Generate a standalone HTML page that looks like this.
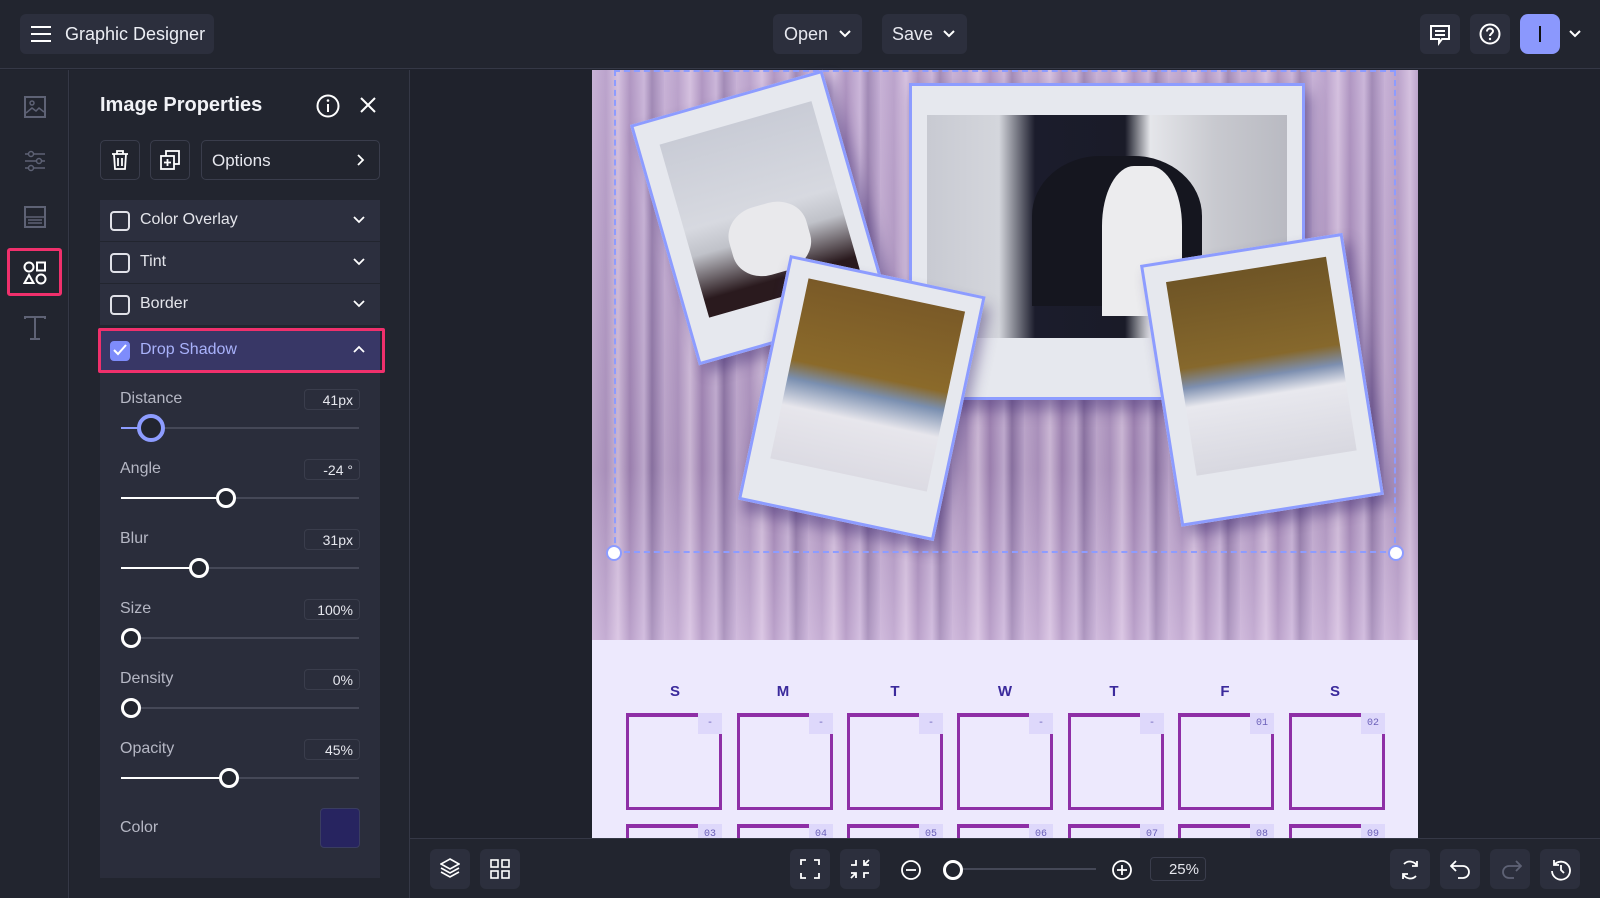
<!DOCTYPE html>
<html><head><meta charset="utf-8"><style>
*{box-sizing:border-box;margin:0;padding:0}
html,body{width:1600px;height:898px;overflow:hidden}
body{background:#1f222c;font-family:"Liberation Sans",sans-serif;color:#e6e7ee;position:relative}
.abs{position:absolute}
.btn{position:absolute;background:#2c2f3d;border-radius:6px}
.row{position:absolute;left:100px;width:280px;height:41px;background:#2c2f3e;font-size:16px;color:#e3e4ea}
.cb{position:absolute;left:10px;top:11px;width:20px;height:20px;border:2px solid #e0e1e8;border-radius:4px}
.row span{position:absolute;left:40px;top:11px}
.chev{position:absolute;right:14px;top:13px;width:14px;height:14px}
.lbl{position:absolute;left:120px;font-size:16px;color:#b5b7c4}
.val{position:absolute;left:304px;width:56px;height:21px;border:1px solid #3a3d4c;border-radius:4px;font-size:14px;text-align:right;padding:2px 6px 0 0;color:#e6e7ee}
.track{position:absolute;left:121px;width:238px;height:2px;background:#454857}
.fill{position:absolute;left:0;top:0;height:2px;background:#fff}
.th{position:absolute;width:20px;height:20px;border:3px solid #fff;border-radius:50%;background:#22252f;top:-9px}
.tb{position:absolute;width:40px;height:40px;background:#2c2f3d;border-radius:6px}
.cell{position:absolute;width:96px;height:97px;border:3px solid #8e2fa6;border-top-width:4px}
.tag{position:absolute;right:-3px;top:-4px;width:24px;height:21px;background:#ded8fb;font-size:10px;color:#6a5fb8;text-align:center;line-height:21px;font-family:"Liberation Mono",monospace}
.day{position:absolute;top:43px;font-size:15px;font-weight:bold;color:#3b2a9c;width:40px;text-align:center}
.pol{position:absolute;background:#e6e8ee;border:3px solid #8d9cff;box-shadow:6px 10px 14px rgba(60,40,110,.45)}
.pol div{position:absolute}
</style></head><body>
<!-- top bar -->
<div class="abs" style="left:0;top:0;width:1600px;height:69px;background:#22252f;border-bottom:1px solid #353846"></div>
<div class="btn" style="left:20px;top:14px;width:194px;height:40px"></div>
<svg class="abs" style="left:31px;top:25px" width="20" height="18"><path d="M0 2H20M0 9H20M0 16H20" stroke="#fff" stroke-width="2"/></svg>
<div class="abs" style="left:65px;top:24px;font-size:18px;color:#eceef4">Graphic Designer</div>
<div class="btn" style="left:773px;top:14px;width:89px;height:40px"></div>
<div class="abs" style="left:784px;top:24px;font-size:18px">Open</div>
<svg class="abs" style="left:839px;top:30px" width="12" height="8"><path d="M1 1L6 6L11 1" stroke="#fff" stroke-width="2" fill="none"/></svg>
<div class="btn" style="left:882px;top:14px;width:85px;height:40px"></div>
<div class="abs" style="left:892px;top:24px;font-size:18px">Save</div>
<svg class="abs" style="left:943px;top:30px" width="12" height="8"><path d="M1 1L6 6L11 1" stroke="#fff" stroke-width="2" fill="none"/></svg>
<div class="btn" style="left:1420px;top:14px;width:40px;height:40px"></div>
<svg class="abs" style="left:1429px;top:24px" width="22" height="22"><path d="M2 2H20V15H13L10 19L10 15H2Z" stroke="#fff" stroke-width="2" fill="none"/><path d="M6 7H16M6 11H16" stroke="#fff" stroke-width="2"/></svg>
<div class="btn" style="left:1470px;top:14px;width:40px;height:40px"></div>
<svg class="abs" style="left:1479px;top:23px" width="22" height="22"><circle cx="11" cy="11" r="9.5" stroke="#fff" stroke-width="2" fill="none"/><path d="M8 8.5C8 6.5 9.5 5.5 11 5.5S14 6.5 14 8.3C14 10.3 11 10.5 11 13" stroke="#fff" stroke-width="2" fill="none"/><circle cx="11" cy="16" r="1.2" fill="#fff"/></svg>
<div class="abs" style="left:1520px;top:14px;width:40px;height:40px;background:#8b98fd;border-radius:8px"></div>
<div class="abs" style="left:1539px;top:26px;width:2px;height:16px;background:#111"></div>
<svg class="abs" style="left:1569px;top:30px" width="12" height="8"><path d="M1 1L6 6L11 1" stroke="#fff" stroke-width="2" fill="none"/></svg>
<!-- rail -->
<div class="abs" style="left:0;top:70px;width:69px;height:828px;background:#22252f;border-right:1px solid #353846"></div>
<svg class="abs" style="left:24px;top:96px" width="22" height="22"><rect x="1" y="1" width="20" height="20" stroke="#5e6275" stroke-width="2" fill="none"/><circle cx="8" cy="7" r="2" stroke="#5e6275" stroke-width="1.5" fill="none"/><path d="M2 17L8 12L12 15L15 12L20 16" stroke="#5e6275" stroke-width="1.5" fill="none"/></svg>
<svg class="abs" style="left:24px;top:150px" width="22" height="22"><path d="M1 4H21M1 11H21M1 18H21" stroke="#5e6275" stroke-width="1.5"/><circle cx="7" cy="4" r="2.5" fill="#22252f" stroke="#5e6275" stroke-width="1.5"/><circle cx="15" cy="11" r="2.5" fill="#22252f" stroke="#5e6275" stroke-width="1.5"/><circle cx="7" cy="18" r="2.5" fill="#22252f" stroke="#5e6275" stroke-width="1.5"/></svg>
<svg class="abs" style="left:24px;top:206px" width="22" height="22"><rect x="1" y="1" width="20" height="20" stroke="#5e6275" stroke-width="2" fill="none"/><path d="M1 11H21M4 14H18M4 17H18" stroke="#5e6275" stroke-width="1.5"/></svg>
<div class="abs" style="left:7px;top:248px;width:55px;height:48px;border:3px solid #f0306c;border-radius:3px"></div>
<svg class="abs" style="left:23px;top:261px" width="24" height="24"><circle cx="6" cy="6" r="4.5" stroke="#fff" stroke-width="2" fill="none"/><rect x="14" y="1.5" width="8" height="8" stroke="#fff" stroke-width="2" fill="none"/><path d="M6 14L10.5 22H1.5Z" stroke="#fff" stroke-width="2" fill="none"/><circle cx="18" cy="18" r="4.5" stroke="#fff" stroke-width="2" fill="none"/></svg>
<svg class="abs" style="left:24px;top:316px" width="22" height="24"><path d="M1 3V1H21V3M11 1V23M6 23H16" stroke="#5e6275" stroke-width="2" fill="none"/></svg>
<!-- panel -->
<div class="abs" style="left:70px;top:70px;width:340px;height:828px;background:#22252f;border-right:1px solid #353846"></div>
<div class="abs" style="left:100px;top:94px;font-size:20px;font-weight:bold;color:#f1f2f6">Image Properties</div>
<svg class="abs" style="left:316px;top:94px" width="24" height="24"><circle cx="12" cy="12" r="10.5" stroke="#fff" stroke-width="2" fill="none"/><path d="M12 10V18" stroke="#fff" stroke-width="2"/><circle cx="12" cy="6.5" r="1.3" fill="#fff"/></svg>
<svg class="abs" style="left:360px;top:97px" width="16" height="16"><path d="M1 1L15 15M15 1L1 15" stroke="#fff" stroke-width="2"/></svg>
<div class="abs" style="left:100px;top:140px;width:40px;height:40px;border:1px solid #3a3d4c;border-radius:5px"></div>
<svg class="abs" style="left:111px;top:150px" width="18" height="20"><path d="M1 4H17M6 4V1H12V4M3 4L4 19H14L15 4M7 8V16M11 8V16" stroke="#fff" stroke-width="1.8" fill="none"/></svg>
<div class="abs" style="left:150px;top:140px;width:40px;height:40px;border:1px solid #3a3d4c;border-radius:5px"></div>
<svg class="abs" style="left:160px;top:150px" width="20" height="20"><rect x="6" y="1" width="13" height="13" stroke="#fff" stroke-width="1.8" fill="none"/><rect x="1" y="6" width="13" height="13" stroke="#fff" stroke-width="1.8" fill="#22252f"/><path d="M7.5 9V16M4 12.5H11" stroke="#fff" stroke-width="1.8"/></svg>
<div class="abs" style="left:201px;top:140px;width:179px;height:40px;border:1px solid #3a3d4c;border-radius:5px"></div>
<div class="abs" style="left:212px;top:151px;font-size:17px">Options</div>
<svg class="abs" style="left:357px;top:154px" width="8" height="12"><path d="M1 1L6 6L1 11" stroke="#fff" stroke-width="1.8" fill="none"/></svg>

<div class="row" style="top:200px"><div class="cb"></div><span>Color Overlay</span><svg class="chev" viewBox="0 0 14 14"><path d="M2 4L7 9L12 4" stroke="#fff" stroke-width="1.8" fill="none"/></svg></div>
<div class="row" style="top:242px"><div class="cb"></div><span>Tint</span><svg class="chev" viewBox="0 0 14 14"><path d="M2 4L7 9L12 4" stroke="#fff" stroke-width="1.8" fill="none"/></svg></div>
<div class="row" style="top:284px"><div class="cb"></div><span>Border</span><svg class="chev" viewBox="0 0 14 14"><path d="M2 4L7 9L12 4" stroke="#fff" stroke-width="1.8" fill="none"/></svg></div>
<div class="row" style="top:330px;background:#383766;color:#a9b2fb"><div class="cb" style="background:#7e8cfb;border-color:#7e8cfb"></div><svg class="abs" style="left:13px;top:14px" width="14" height="12"><path d="M1 6L5 10L13 1" stroke="#fff" stroke-width="2" fill="none"/></svg><span>Drop Shadow</span><svg class="chev" viewBox="0 0 14 14"><path d="M2 9L7 4L12 9" stroke="#fff" stroke-width="1.8" fill="none"/></svg></div>
<div class="abs" style="left:98px;top:328px;width:287px;height:45px;border:3px solid #f0306c;border-radius:2px"></div>
<div class="abs" style="left:100px;top:373px;width:280px;height:505px;background:#2a2d3b"></div>

<div class="lbl" style="top:390px">Distance</div><div class="val" style="top:389px">41px</div>
<div class="track" style="top:427px"><div class="fill" style="width:28px;background:#8d9cff"></div><div class="th" style="left:16px;top:-13px;width:28px;height:28px;border:4px solid #8d9cff"></div></div>
<div class="lbl" style="top:460px">Angle</div><div class="val" style="top:459px">-24 °</div>
<div class="track" style="top:497px"><div class="fill" style="width:105px"></div><div class="th" style="left:95px"></div></div>
<div class="lbl" style="top:530px">Blur</div><div class="val" style="top:529px">31px</div>
<div class="track" style="top:567px"><div class="fill" style="width:78px"></div><div class="th" style="left:68px"></div></div>
<div class="lbl" style="top:600px">Size</div><div class="val" style="top:599px">100%</div>
<div class="track" style="top:637px"><div class="th" style="left:0px"></div></div>
<div class="lbl" style="top:670px">Density</div><div class="val" style="top:669px">0%</div>
<div class="track" style="top:707px"><div class="th" style="left:0px"></div></div>
<div class="lbl" style="top:740px">Opacity</div><div class="val" style="top:739px">45%</div>
<div class="track" style="top:777px"><div class="fill" style="width:108px"></div><div class="th" style="left:98px"></div></div>
<div class="lbl" style="top:819px">Color</div>
<div class="abs" style="left:320px;top:808px;width:40px;height:40px;background:#272460;border:1px solid #3a3d60;border-radius:4px"></div>

<!-- canvas -->
<div class="abs" style="left:592px;top:70px;width:826px;height:570px;background:repeating-linear-gradient(90deg,#c9b2d6 0,#b59bc6 14px,#dcc8e4 26px,#a588b8 38px,#cdb8db 52px,#8f76a6 60px,#c3acd3 72px);"></div>
<div class="abs" style="left:592px;top:70px;width:826px;height:570px;background:linear-gradient(180deg,rgba(200,180,215,.35),rgba(90,70,110,.15) 70%,rgba(220,200,230,.4))"></div>
<div class="pol" style="left:909px;top:83px;width:396px;height:317px"><div style="left:15px;top:29px;width:360px;height:223px;background:linear-gradient(90deg,#c8cad2 0,#d4d6dc 20%,#1b1c2c 30%,#1a1b28 55%,#e5e6ea 62%,#c8c9cf 80%,#b9bac2 100%)"></div><div style="left:120px;top:70px;width:170px;height:150px;background:#15161f;border-radius:40% 40% 0 0"></div><div style="left:190px;top:80px;width:80px;height:150px;background:#ececee;border-radius:40% 40% 0 0"></div></div>
<div class="pol" style="width:200px;height:250px;transform:rotate(-16deg);transform-origin:0 0;left:630px;top:125px"><div style="left:20px;top:24px;width:158px;height:180px;background:linear-gradient(180deg,#c9ccd6 0,#d7d9e0 50%,#c0c2c9 65%,#2a1a1e 90%)"></div><div style="left:60px;top:110px;width:80px;height:70px;background:#e9e9ec;border-radius:40%"></div></div>
<div class="pol" style="left:790px;top:255px;width:200px;height:250px;transform:rotate(12deg);transform-origin:0 0"><div style="left:20px;top:16px;width:160px;height:184px;background:linear-gradient(180deg,#7a5a28 0,#8b6a2a 45%,#7a8fb0 55%,#e7e6ec 70%,#dcdbe3 100%)"></div></div>
<div class="pol" style="left:1140px;top:265px;width:205px;height:265px;transform:rotate(-9deg);transform-origin:0 0"><div style="left:20px;top:18px;width:162px;height:196px;background:linear-gradient(180deg,#6f5526 0,#86682c 45%,#7d8fb0 55%,#e8e8ee 65%,#d8d8e0 100%)"></div></div>
<div class="abs" style="left:614px;top:70px;width:782px;height:483px;border:2px dashed #8d9cff"></div>
<div class="abs" style="left:606px;top:545px;width:16px;height:16px;border-radius:50%;background:#fff;border:2px solid #8d9cff"></div>
<div class="abs" style="left:1388px;top:545px;width:16px;height:16px;border-radius:50%;background:#fff;border:2px solid #8d9cff"></div>
<div class="abs" style="left:592px;top:640px;width:826px;height:198px;background:#ede9fd;overflow:hidden">
<div class="day" style="left:63px">S</div><div class="day" style="left:171px">M</div><div class="day" style="left:283px">T</div><div class="day" style="left:393px">W</div><div class="day" style="left:502px">T</div><div class="day" style="left:613px">F</div><div class="day" style="left:723px">S</div>
<div class="cell" style="left:34px;top:73px"><div class="tag">-</div></div>
<div class="cell" style="left:145px;top:73px"><div class="tag">-</div></div>
<div class="cell" style="left:255px;top:73px"><div class="tag">-</div></div>
<div class="cell" style="left:365px;top:73px"><div class="tag">-</div></div>
<div class="cell" style="left:476px;top:73px"><div class="tag">-</div></div>
<div class="cell" style="left:586px;top:73px"><div class="tag">01</div></div>
<div class="cell" style="left:697px;top:73px"><div class="tag">02</div></div>
<div class="cell" style="left:34px;top:184px"><div class="tag">03</div></div>
<div class="cell" style="left:145px;top:184px"><div class="tag">04</div></div>
<div class="cell" style="left:255px;top:184px"><div class="tag">05</div></div>
<div class="cell" style="left:365px;top:184px"><div class="tag">06</div></div>
<div class="cell" style="left:476px;top:184px"><div class="tag">07</div></div>
<div class="cell" style="left:586px;top:184px"><div class="tag">08</div></div>
<div class="cell" style="left:697px;top:184px"><div class="tag">09</div></div>
</div>
<!-- bottom bar -->
<div class="abs" style="left:410px;top:838px;width:1190px;height:60px;background:#22252f;border-top:1px solid #353846"></div>
<div class="tb" style="left:430px;top:849px"></div>
<svg class="abs" style="left:440px;top:858px" width="20" height="22"><path d="M10 1L19 6L10 11L1 6Z M1 10L10 15L19 10 M1 14L10 19L19 14" stroke="#fff" stroke-width="1.6" fill="none"/></svg>
<div class="tb" style="left:480px;top:849px"></div>
<svg class="abs" style="left:490px;top:859px" width="20" height="20"><rect x="1" y="1" width="7" height="7" stroke="#fff" stroke-width="1.6" fill="none"/><rect x="12" y="1" width="7" height="7" stroke="#fff" stroke-width="1.6" fill="none"/><rect x="1" y="12" width="7" height="7" stroke="#fff" stroke-width="1.6" fill="none"/><rect x="12" y="12" width="7" height="7" stroke="#fff" stroke-width="1.6" fill="none"/></svg>
<div class="tb" style="left:790px;top:849px"></div>
<svg class="abs" style="left:800px;top:859px" width="20" height="20"><path d="M1 6V1H6M14 1H19V6M19 14V19H14M6 19H1V14" stroke="#fff" stroke-width="1.8" fill="none"/></svg>
<div class="tb" style="left:840px;top:849px"></div>
<svg class="abs" style="left:850px;top:859px" width="20" height="20"><path d="M1 6H6V1M14 1V6H19M19 14H14V19M6 19V14H1M14 6L19 1M6 14L1 19" stroke="#fff" stroke-width="1.8" fill="none"/></svg>
<svg class="abs" style="left:900px;top:859px" width="22" height="22"><circle cx="11" cy="11" r="9" stroke="#fff" stroke-width="1.8" fill="none"/><path d="M6 11H16" stroke="#fff" stroke-width="1.8"/></svg>
<div class="abs" style="left:953px;top:868px;width:143px;height:2px;background:#454857"></div>
<div class="abs" style="left:943px;top:860px;width:20px;height:20px;border-radius:50%;border:3px solid #fff;background:#22252f"></div>
<svg class="abs" style="left:1111px;top:859px" width="22" height="22"><circle cx="11" cy="11" r="9" stroke="#fff" stroke-width="1.8" fill="none"/><path d="M6 11H16M11 6V16" stroke="#fff" stroke-width="1.8"/></svg>
<div class="abs" style="left:1150px;top:857px;width:56px;height:24px;border:1px solid #3a3d4c;border-radius:4px;font-size:15px;text-align:right;padding:3px 6px 0 0">25%</div>
<div class="tb" style="left:1390px;top:849px"></div>
<svg class="abs" style="left:1400px;top:859px" width="20" height="22"><path d="M4 5A8 8 0 0 1 17 7M16 17A8 8 0 0 1 3 15M17 2V7H12M3 20V15H8" stroke="#fff" stroke-width="1.8" fill="none"/></svg>
<div class="tb" style="left:1440px;top:849px"></div>
<svg class="abs" style="left:1450px;top:859px" width="22" height="20"><path d="M6 2L1 7L6 12M1 7H13A6 6 0 0 1 13 19H8" stroke="#fff" stroke-width="1.8" fill="none"/></svg>
<div class="tb" style="left:1490px;top:849px"></div>
<svg class="abs" style="left:1500px;top:859px" width="22" height="20"><path d="M16 2L21 7L16 12M21 7H9A6 6 0 0 0 9 19H14" stroke="#5e6275" stroke-width="1.8" fill="none"/></svg>
<div class="tb" style="left:1540px;top:849px"></div>
<svg class="abs" style="left:1550px;top:859px" width="22" height="22"><path d="M4 6A9 9 0 1 1 2 12M4 1V6H9M11 6V11L14 14" stroke="#fff" stroke-width="1.8" fill="none"/></svg>
</body></html>
